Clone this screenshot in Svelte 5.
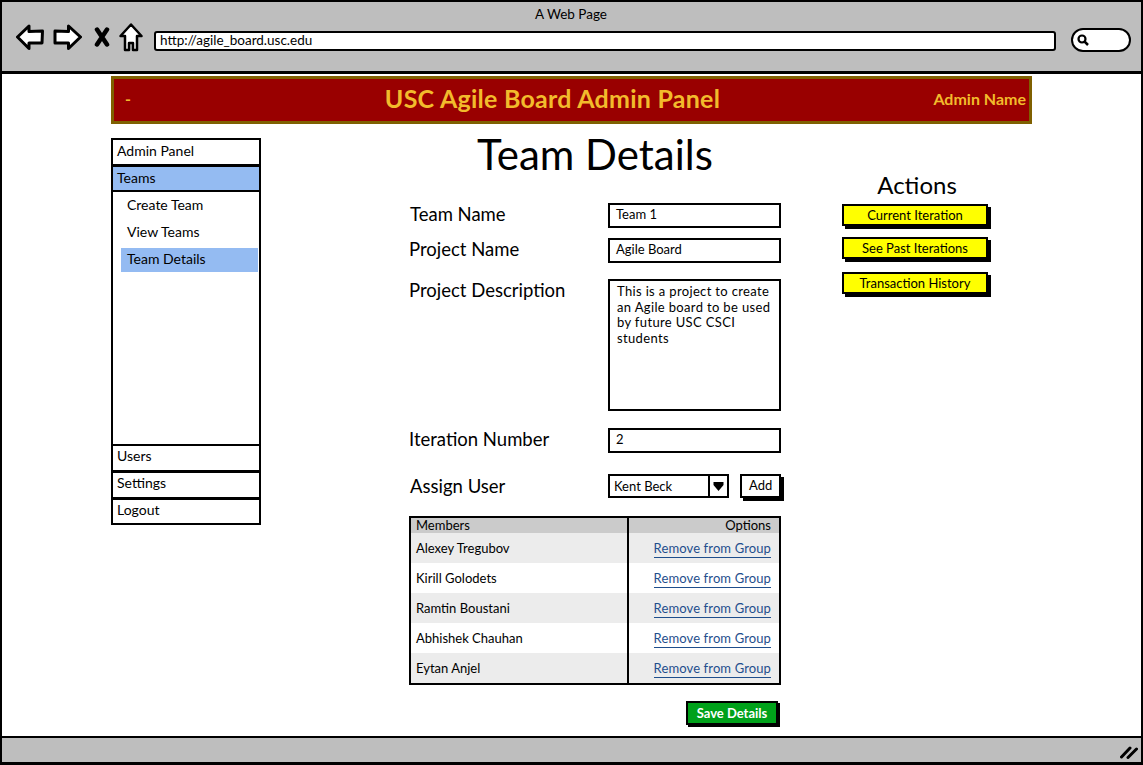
<script>
  const nav = ['Create Team', 'View Teams', 'Team Details'];
  const members = ['Alexey Tregubov', 'Kirill Golodets', 'Ramtin Boustani', 'Abhishek Chauhan', 'Eytan Anjel'];
  const actions = ['Current Iteration', 'See Past Iterations', 'Transaction History'];
</script>

<div class="window">
  <div class="chrome">
    <div class="title">A Web Page</div>
    <div class="toolbar">
      <svg class="ic back" width="28" height="28" viewBox="0 0 28 28"><path d="M1.5 14 L13 3 L13 8.5 L26.5 8 L26 20 L13 20 L13 25.5 Z" fill="#fff" stroke="#000" stroke-width="3" stroke-linejoin="round"/></svg>
      <svg class="ic fwd" width="29" height="28" viewBox="0 0 29 28"><path d="M27.5 14 L15.5 3 L15.5 8.5 L2 8 L2 20 L15.5 20 L15.5 25.5 Z" fill="#fff" stroke="#000" stroke-width="3" stroke-linejoin="round"/></svg>
      <svg class="ic x" width="16" height="20" viewBox="0 0 16 20"><path d="M3 2.500 L13 17.500 M13 2.500 L3 17.500" fill="none" stroke="#000" stroke-width="4.500" stroke-linecap="round"/></svg>
      <svg class="ic home" width="24" height="29" viewBox="0 0 24 29"><path d="M12 1.500 L22.500 13 L18 13 L18 27 L14 27 L14 20 L10 20 L10 27 L6 27 L6 13 L1.500 13 Z" fill="#fff" stroke="#000" stroke-width="2.500" stroke-linejoin="round"/></svg>
      <div class="url">http://agile_board.usc.edu</div>
      <div class="search">
        <svg width="14" height="14" viewBox="0 0 14 14"><circle cx="6" cy="6" r="3.500" fill="none" stroke="#000" stroke-width="2.200"/><path d="M8.500 8.500 L12 12" stroke="#000" stroke-width="2.500"/></svg>
      </div>
    </div>
  </div>

  <div class="content">
    <header class="banner">
      <span class="dash">-</span>
      <span class="heading">USC Agile Board Admin Panel</span>
      <span class="admin">Admin Name</span>
    </header>

    <div class="columns">
      <nav class="side">
        <div class="item">Admin Panel</div>
        <div class="item active">Teams</div>
        <div class="sub">
          {#each nav as n, i}
            <div class="subitem" class:current={i === 2}>{n}</div>
          {/each}
        </div>
        <div class="item low">Users</div>
        <div class="item low">Settings</div>
        <div class="item low">Logout</div>
      </nav>

      <main class="main">
        <h1>Team Details</h1>
        <div class="row r1">
          <span class="label">Team Name</span>
          <div class="field">Team 1</div>
        </div>
        <div class="row r2">
          <span class="label">Project Name</span>
          <div class="field">Agile Board</div>
        </div>
        <div class="row r3">
          <span class="label">Project Description</span>
          <div class="field area">This is a project to create an Agile board to be used by future USC CSCI students</div>
        </div>
        <div class="row r4">
          <span class="label">Iteration Number</span>
          <div class="field">2</div>
        </div>
        <div class="row r5">
          <span class="label">Assign User</span>
          <div class="assign">
            <div class="select">
              <span class="value">Kent Beck</span>
              <span class="arrow"><svg width="11" height="10" viewBox="0 0 11 10"><path d="M0.500 1 L10.500 1 L10.500 4 L5.500 10 L0.500 4 Z" fill="#000"/></svg></span>
            </div>
            <div class="add">Add</div>
          </div>
        </div>

        <div class="table">
          <div class="thead">
            <span class="c1">Members</span>
            <span class="c2">Options</span>
          </div>
          {#each members as m, i}
            <div class="tr" class:odd={i % 2 === 0}>
              <span class="c1">{m}</span>
              <span class="c2"><span class="link">Remove from Group</span></span>
            </div>
          {/each}
        </div>

        <div class="save-row"><div class="save">Save Details</div></div>
      </main>

      <aside class="actions">
        <h2>Actions</h2>
        {#each actions as a}
          <div class="yellow">{a}</div>
        {/each}
      </aside>
    </div>
  </div>

  <div class="status">
    <svg width="18" height="14" viewBox="0 0 18 14"><path d="M1.500 12 L10 3 M8 12.500 L16.500 4" fill="none" stroke="#000" stroke-width="3" stroke-linecap="round"/></svg>
  </div>
</div>

<style>
  :global(body) {
    margin: 0;
    background: #fff;
  }

  .window {
    box-sizing: border-box;
    width: 1143px;
    height: 765px;
    border: 2px solid #000;
    border-bottom-width: 3px;
    display: flex;
    flex-direction: column;
    font-family: Lato, sans-serif;
    color: #000;
    overflow: hidden;
  }

  .chrome {
    box-sizing: border-box;
    height: 72px;
    background: #bebebe;
    border-bottom: 3px solid #000;
    flex: none;
  }

  .title {
    text-align: center;
    font-size: 13.500px;
    line-height: 16px;
    padding-top: 4px;
    padding-right: 1px;
  }

  .toolbar {
    display: flex;
    align-items: center;
    padding-left: 14px;
    height: 28px;
    margin-top: 1px;
  }

  .ic { flex: none; display: block; }
  .fwd { margin-left: 9px; }
  .x { margin-left: 12px; }
  .home { margin-left: 9px; }

  .url {
    box-sizing: border-box;
    width: 902px;
    height: 20px;
    margin: 8px 0 0 11px;
    background: #fff;
    border: 2px solid #000;
    border-radius: 3px;
    padding-left: 4px;
    font-size: 13.500px;
    line-height: 15px;
  }

  .search {
    box-sizing: border-box;
    width: 60px;
    height: 24px;
    margin: 6px 0 0 15px;
    background: #fff;
    border: 2px solid #000;
    border-radius: 12px;
    padding: 3px 0 0 3px;
  }

  .search svg { display: block; }

  .content {
    flex: 1;
    padding: 2px 0 0 109px;
    background: #fff;
  }

  .banner {
    box-sizing: border-box;
    width: 921px;
    height: 48px;
    background: #990000;
    border: 3px solid #7f6000;
    padding-bottom: 4px;
    display: grid;
    grid-template-columns: 40px 1fr 130px;
    align-items: center;
    color: #f2bb2c;
    font-weight: 700;
  }

  .dash { padding-left: 11px; font-size: 16px; }
  .heading { text-align: center; font-size: 25px; letter-spacing: 0.25px; padding-left: 52px; }
  .admin { text-align: right; padding-right: 3px; font-size: 16px; }

  .columns {
    display: flex;
    align-items: flex-start;
    padding-top: 14px;
  }

  .side {
    box-sizing: border-box;
    width: 150px;
    height: 387px;
    display: flex;
    flex-direction: column;
    font-size: 14px;
    flex: none;
  }

  .item {
    box-sizing: border-box;
    height: 27px;
    flex: none;
    border: 2px solid #000;
    border-bottom-width: 1px;
    padding-left: 4px;
    line-height: 21px;
    background: #fff;
  }

  .item.low { line-height: 19px; }
  .item:last-child { border-bottom-width: 2px; }
  .item.active { background: #94bbf2; border-width: 2px; }

  .sub {
    flex: 1;
    border-left: 2px solid #000;
    border-right: 2px solid #000;
    padding: 0 1px 0 8px;
  }

  .subitem {
    height: 24px;
    line-height: 22px;
    margin-top: 3px;
    padding-left: 6px;
  }

  .subitem:first-child { margin-top: 2px; }
  .subitem.current { background: #94bbf2; }

  .main {
    width: 372px;
    margin-left: 148px;
    flex: none;
  }

  h1 {
    margin: 0;
    height: 65px;
    text-align: center;
    font-size: 42px;
    font-weight: 400;
    line-height: 33px;
  }

  .row {
    display: grid;
    grid-template-columns: 199px 173px;
    font-size: 18.500px;
  }

  .label { line-height: 22px; }
  .r2 { margin-top: 10px; }
  .r3 { margin-top: 16px; }
  .r4 { margin-top: 17px; }
  .r5 { margin-top: 21px; }
  .r1 .label { padding-left: 1px; }
  .r5 .label { padding-left: 1px; line-height: 25px; }

  .field {
    box-sizing: border-box;
    height: 25px;
    background: #fff;
    border: 2px solid #000;
    padding-left: 6px;
    font-size: 13px;
    line-height: 19px;
  }

  .area {
    height: 132px;
    padding: 3px 6px 3px 7px;
    line-height: 15.500px;
    letter-spacing: 0.35px;
  }

  .assign { display: flex; align-items: flex-start; }

  .select {
    box-sizing: border-box;
    width: 122px;
    height: 24px;
    border: 2px solid #000;
    display: flex;
    font-size: 13px;
    line-height: 20px;
    padding-left: 4px;
  }

  .value { flex: 1; }

  .arrow {
    width: 17px;
    border-left: 2px solid #000;
    display: flex;
    align-items: center;
    justify-content: center;
  }

  .add {
    box-sizing: border-box;
    width: 41px;
    height: 24px;
    margin-left: 11px;
    background: #fff;
    border: 2px solid #000;
    box-shadow: 3px 3px 0 #000;
    text-align: center;
    font-size: 13px;
    line-height: 19px;
  }

  .table {
    box-sizing: border-box;
    margin-top: 17px;
    height: 169px;
    border: 2px solid #000;
    font-size: 13px;
  }

  .thead, .tr {
    display: grid;
    grid-template-columns: 218px 1fr;
    padding: 0;
  }

  .thead { height: 15px; line-height: 15px; background: #cbcbcb; }
  .tr { height: 30px; line-height: 30px; }
  .tr.odd { background: #ececec; }
  .c1 { padding-left: 5px; border-right: 2px solid #000; }
  .c2 { text-align: right; padding-right: 8px; }

  .link {
    color: #1f4e8c;
    border-bottom: 1px solid #1f4e8c;
    padding-bottom: 1px;
    letter-spacing: 0.12px;
  }

  .save-row {
    display: flex;
    justify-content: flex-end;
    margin-top: 16px;
    padding-right: 3px;
  }

  .save {
    box-sizing: border-box;
    width: 92px;
    height: 24px;
    background: #00a11a;
    border: 2px solid #000;
    box-shadow: 2px 2px 0 #000;
    color: #fff;
    font-weight: 700;
    font-size: 13px;
    line-height: 20px;
    text-align: center;
  }

  .actions {
    width: 148px;
    margin-left: 61px;
    flex: none;
    padding-top: 33px;
  }

  h2 {
    margin: 0 0 5px;
    font-size: 24px;
    font-weight: 400;
    line-height: 28px;
    text-align: center;
    padding-left: 2px;
  }

  .yellow {
    box-sizing: border-box;
    width: 146px;
    height: 22px;
    margin-bottom: 11px;
    background: #ffff00;
    border: 2px solid #000;
    box-shadow: 3px 3px 0 #000;
    text-align: center;
    font-size: 13px;
    line-height: 19px;
  }

  .yellow:nth-child(3) { margin-bottom: 13px; }

  .status {
    box-sizing: border-box;
    height: 26px;
    flex: none;
    background: #bebebe;
    border-top: 2px solid #000;
    display: flex;
    justify-content: flex-end;
    align-items: center;
    padding: 3px 3px 0 0;
  }
</style>
